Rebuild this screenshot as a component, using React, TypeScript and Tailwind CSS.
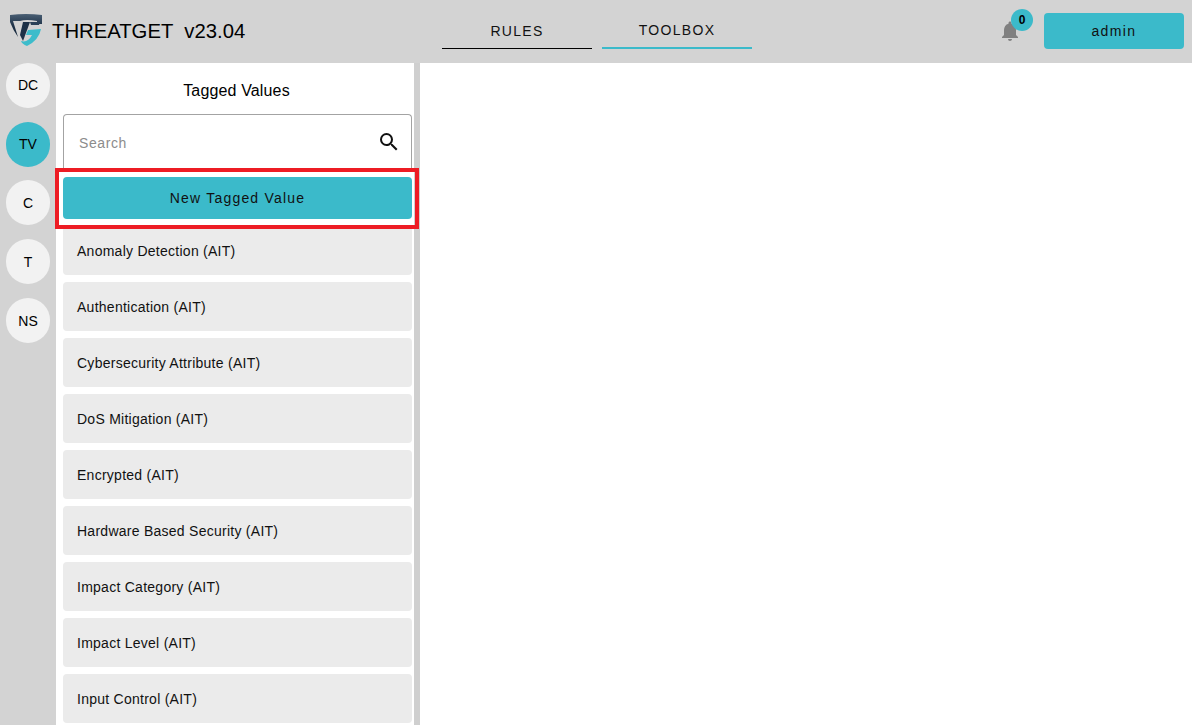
import { MdNotifications, MdSearch } from 'react-icons/md'

const rail = [
  { label: 'DC', active: false, nudge: '' },
  { label: 'TV', active: true, nudge: '' },
  { label: 'C', active: false, nudge: 'pt-[2px]' },
  { label: 'T', active: false, nudge: 'pt-[2px]' },
  { label: 'NS', active: false, nudge: 'pt-[2px]' },
]

const items = [
  'Anomaly Detection (AIT)',
  'Authentication (AIT)',
  'Cybersecurity Attribute (AIT)',
  'DoS Mitigation (AIT)',
  'Encrypted (AIT)',
  'Hardware Based Security (AIT)',
  'Impact Category (AIT)',
  'Impact Level (AIT)',
  'Input Control (AIT)',
]

function Logo() {
  return (
    <svg width="33" height="33" viewBox="0 0 33 33" className="shrink-0 translate-y-[-1px]">
      <defs>
        <linearGradient id="shield" x1="0" y1="0" x2="0" y2="1">
          <stop offset="0" stopColor="#4a5f74" />
          <stop offset="0.5" stopColor="#1f3349" />
          <stop offset="1" stopColor="#14263a" />
        </linearGradient>
      </defs>
      <path d="M0 1 Q16 -1 32 1 L32 10 L27 10 L27 7 Q16 5 10 7 L3 7 L8 23 Q3 16 0 8 Z" fill="url(#shield)" />
      <path d="M13 8 L20 8 L13 27 L10 21 Z" fill="#1c3046" />
      <path d="M20 8 L30 8 L29 11 L21 11 Z" fill="#2b4157" />
      <path d="M18 16 L31 15 Q29 26 17 32 Q12 30 11 27 Q18 29 22 21 L16 21 Z" fill="#3dbccb" />
    </svg>
  )
}

export default function App() {
  return (
    <div className="h-[725px] w-[1192px] overflow-hidden bg-[#d3d3d3] font-['Liberation_Sans',Arial,sans-serif] text-black">
      <header className="flex h-[63px] items-center pl-[10px]">
        <Logo />
        <div className="ml-[9px] flex w-[193px] shrink-0 gap-[11px] text-[20.3px] leading-none">
          <span>THREATGET</span>
          <span>v23.04</span>
        </div>
        <nav className="ml-[197px] flex gap-[10px]">
          <div className="flex h-[36px] w-[150px] translate-y-[-1px] items-center justify-center border-b border-black pt-[3px] text-[14px] tracking-[1.3px] text-[#111]">
            RULES
          </div>
          <div className="flex h-[36px] w-[150px] translate-y-[-1px] items-center justify-center border-b-2 border-[#3bbaca] pt-[1px] text-[14px] tracking-[1.3px] text-[#111]">
            TOOLBOX
          </div>
        </nav>
        <div className="relative ml-[246px] h-6 w-6">
          <MdNotifications size={24} className="absolute left-0 top-[-1px] text-[#808080]" />
          <span className="absolute left-[13px] top-[-11px] flex h-[22px] w-[22px] items-center justify-center rounded-full bg-[#3bbaca] text-[12px] font-bold">
            0
          </span>
        </div>
        <button className="ml-[22px] h-[36px] w-[140px] translate-y-[-1px] rounded bg-[#3bbaca] pt-[2px] text-[14px] tracking-[1.4px] text-[#111]">
          admin
        </button>
      </header>

      <div className="flex h-[662px]">
        <aside className="flex w-[56px] shrink-0 flex-col gap-[13.7px] pl-[6px]">
          {rail.map((r) => (
            <div
              key={r.label}
              className={`flex h-[45px] w-[44px] items-center justify-center rounded-full text-[14px] ${r.nudge} ${
                r.active ? 'bg-[#3bbaca]' : 'bg-[#f2f2f2]'
              }`}
            >
              {r.label}
            </div>
          ))}
        </aside>

        <section className="relative flex w-[364px] shrink-0 border-r border-[#cfcfcf] bg-white">
          <div className="flex w-[358px] flex-col pl-[7px]">
            <h2 className="w-[349px] pb-[14px] pt-[18px] pr-[2px] text-center text-[16px] leading-[19px] font-normal tracking-[0.15px]">Tagged Values</h2>
            <div className="flex h-[54px] w-[349px] shrink-0 items-center justify-between rounded-t border border-b-0 border-[#a3a3a3] pl-[15px] pr-[10px]">
              <span className="pt-[4px] text-[14px] tracking-[0.6px] text-[#8c8c8c]">Search</span>
              <MdSearch size={24} className="text-[#111]" />
            </div>
            <button className="mt-[9px] h-[42px] w-[349px] shrink-0 rounded bg-[#3bbaca] text-[14px] tracking-[1.2px] text-[#111]">
              New Tagged Value
            </button>
            <ul className="mt-[7px] flex flex-col gap-[7px]">
              {items.map((name) => (
                <li
                  key={name}
                  className="flex h-[49px] w-[349px] items-center rounded bg-[#ebebeb] pl-[14px] pt-[2px] text-[14px] tracking-[0.26px] text-[#111]"
                >
                  {name}
                </li>
              ))}
            </ul>
          </div>
          <div className="w-[5px] bg-[#cfcfcf]" />
          <div className="absolute left-[-1px] top-[105px] h-[61px] w-[364px] border-4 border-[#ed1c24]" />
        </section>

        <main className="flex-1 bg-white" />
      </div>
    </div>
  )
}
